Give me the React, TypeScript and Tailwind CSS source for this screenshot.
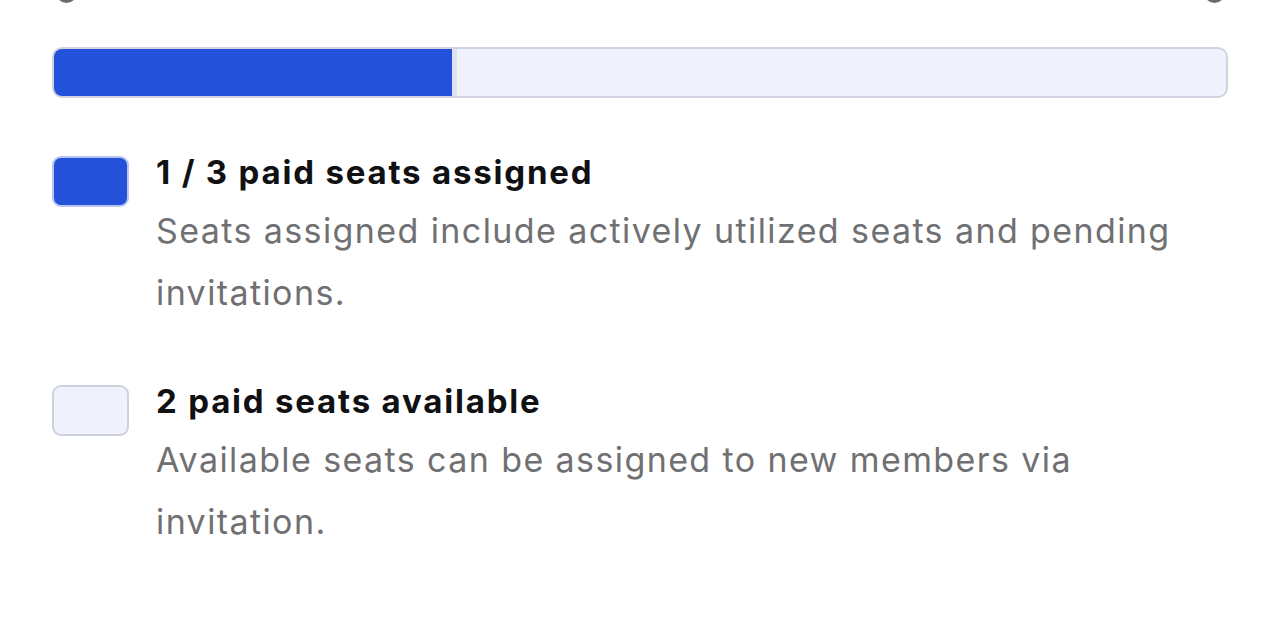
const items = [
  {
    filled: true,
    title: '1 / 3 paid seats assigned',
    text: 'Seats assigned include actively utilized seats and pending invitations.',
  },
  {
    filled: false,
    title: '2 paid seats available',
    text: 'Available seats can be assigned to new members via invitation.',
  },
];

export default function App() {
  return (
    <div className="min-h-[623px] w-[1280px] overflow-hidden bg-white font-['Inter',sans-serif]">
      <div className="flex justify-between pl-[56px] pr-[55px]">
        <span className="-mt-[18px] block h-[21px] w-[21px] rounded-full bg-[#6b6b6b]" />
        <span className="-mt-[18px] block h-[21px] w-[21px] rounded-full bg-[#6b6b6b]" />
      </div>

      <div className="px-[52px] pt-[44px]">
        <div className="flex h-[51px] overflow-hidden rounded-[10px] border-2 border-[#cfd3e2] bg-[#f0f3fd]">
          <div className="h-full w-[403px] border-r-[5px] border-[#dfe3f0] bg-[#2451d9]" />
        </div>

        <div className="mt-[54px] flex flex-col gap-[57px]">
          {items.map((item) => (
            <div key={item.title} className="flex items-start gap-[27px]">
              <div
                className={
                  item.filled
                    ? 'mt-[4px] h-[51px] w-[77px] shrink-0 rounded-[9px] border-2 border-[#b8c5f1] bg-[#2451d9]'
                    : 'mt-[4px] h-[51px] w-[77px] shrink-0 rounded-[9px] border-2 border-[#cfd2dc] bg-[#eff2fc]'
                }
              />
              <div className="min-w-0 flex-1">
                <div className="text-[33px] font-bold leading-[40px] tracking-[1.8px] text-[#111114]">
                  {item.title}
                </div>
                <p className="mt-[8px] text-[34px] leading-[62px] tracking-[1.4px] text-[#707073]">
                  {item.text}
                </p>
              </div>
            </div>
          ))}
        </div>
      </div>
    </div>
  );
}
